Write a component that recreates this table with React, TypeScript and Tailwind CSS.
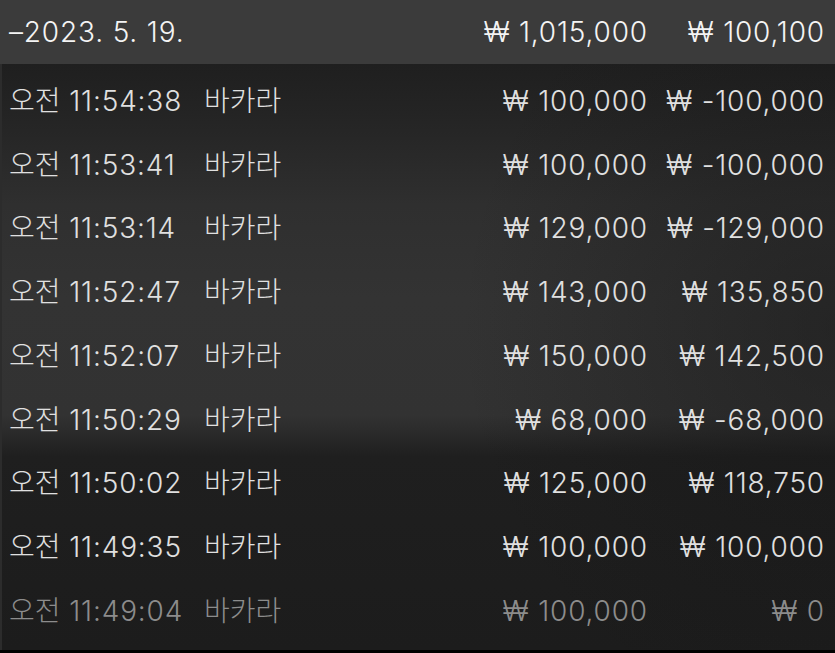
import React from "react";

type Row = { ampm: string; time: string; game: string; bet: string; win: string };

const rows: Row[] = [
  { ampm: "오전", time: "11:54:38", game: "바카라", bet: "₩ 100,000", win: "₩ -100,000" },
  { ampm: "오전", time: "11:53:41", game: "바카라", bet: "₩ 100,000", win: "₩ -100,000" },
  { ampm: "오전", time: "11:53:14", game: "바카라", bet: "₩ 129,000", win: "₩ -129,000" },
  { ampm: "오전", time: "11:52:47", game: "바카라", bet: "₩ 143,000", win: "₩ 135,850" },
  { ampm: "오전", time: "11:52:07", game: "바카라", bet: "₩ 150,000", win: "₩ 142,500" },
  { ampm: "오전", time: "11:50:29", game: "바카라", bet: "₩ 68,000", win: "₩ -68,000" },
  { ampm: "오전", time: "11:50:02", game: "바카라", bet: "₩ 125,000", win: "₩ 118,750" },
  { ampm: "오전", time: "11:49:35", game: "바카라", bet: "₩ 100,000", win: "₩ 100,000" },
  { ampm: "오전", time: "11:49:04", game: "바카라", bet: "₩ 100,000", win: "₩ 0" },
];

const font = { fontFamily: 'Inter, "Noto Sans CJK KR", sans-serif' };

export default function App() {
  return (
    <div
      className="relative flex h-[653px] w-[835px] flex-col overflow-hidden bg-[#1c1c1c] text-[28px] font-light tracking-[0.03em]"
      style={font}
    >
      <header className="flex h-[64px] shrink-0 items-center bg-[#3b3b3b] pl-[9px] pr-[10px] text-[#f4f4f4]">
        <span className="flex-1">–2023. 5. 19.</span>
        <span className="w-[240px] text-right">₩ 1,015,000</span>
        <span className="w-[177px] text-right">₩ 100,100</span>
      </header>

      <section className="relative flex-1 border-l-2 border-[#2c2c2c] bg-[linear-gradient(180deg,#1f1f1f_0%,#252525_10%,#2f2f2f_24%,#333333_40%,#323232_60%,#2a2a2a_63%,#1f1f1f_67%,#1c1c1c_100%)]">
        <div
          className="pointer-events-none absolute inset-0 bg-[radial-gradient(ellipse_45%_70%_at_100%_45%,rgba(20,20,20,0.45),transparent)]"
          aria-hidden
        />
        <div className="relative flex flex-col pt-[5px]">
          {rows.map((r, i) => {
            const faded = i === rows.length - 1;
            return (
              <div
                key={i}
                className={`flex h-[63.75px] items-center pl-[7px] pr-[10px] ${faded ? "text-[#8c8c8c]" : "text-[#e0e0e0]"}`}
              >
                <span className="w-[195px] whitespace-nowrap">
                  <span className="tracking-normal">{r.ampm}</span> {r.time}
                </span>
                <span className="flex-1 tracking-normal">{r.game}</span>
                <span className="w-[240px] text-right">{r.bet}</span>
                <span className="w-[177px] text-right">{r.win}</span>
              </div>
            );
          })}
        </div>
      </section>
      <div className="h-[3px] shrink-0 bg-black" />
    </div>
  );
}
